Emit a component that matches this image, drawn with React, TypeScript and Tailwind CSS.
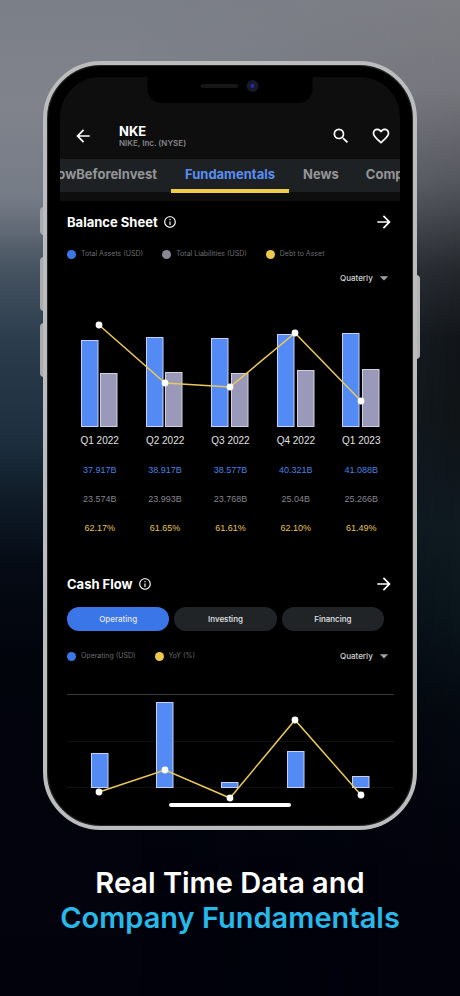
import {
  MdArrowBack,
  MdArrowDropDown,
  MdArrowForward,
  MdFavoriteBorder,
  MdInfoOutline,
  MdSearch,
} from "react-icons/md";

type Bar = { x: number; top: number };
type Point = { x: number; y: number };
type LegendItem = { label: string; dot: string };

const quarters = ["Q1 2022", "Q2 2022", "Q3 2022", "Q4 2022", "Q1 2023"];

const balanceRows = [
  {
    label: "Total Assets (USD)",
    color: "text-[#4a80e4]",
    values: ["37.917B", "38.917B", "38.577B", "40.321B", "41.088B"],
  },
  {
    label: "Total Liabilities (USD)",
    color: "text-[#85858f]",
    values: ["23.574B", "23.993B", "23.768B", "25.04B", "25.266B"],
  },
  {
    label: "Debt to Asset",
    color: "text-[#e3c558]",
    values: ["62.17%", "61.65%", "61.61%", "62.10%", "61.49%"],
  },
];

const assetBars: Bar[] = [
  { x: 14, top: 22 },
  { x: 79, top: 19 },
  { x: 144, top: 20 },
  { x: 210, top: 16 },
  { x: 275, top: 15 },
];

const liabilityBars: Bar[] = [
  { x: 33, top: 55 },
  { x: 98, top: 54 },
  { x: 164, top: 55 },
  { x: 230, top: 52 },
  { x: 295, top: 51 },
];

const debtPoints: Point[] = [
  { x: 32, y: 7 },
  { x: 98, y: 65 },
  { x: 163, y: 69 },
  { x: 228, y: 15 },
  { x: 294, y: 83 },
];

const cashBars: Bar[] = [
  { x: 24, top: 63 },
  { x: 89, top: 12 },
  { x: 154, top: 92 },
  { x: 220, top: 61 },
  { x: 285, top: 86 },
];

const yoyPoints: Point[] = [
  { x: 32, y: 102 },
  { x: 98, y: 80 },
  { x: 163, y: 108 },
  { x: 228, y: 30 },
  { x: 294, y: 105 },
];

function Bars({ bars, base, fill, stroke }: { bars: Bar[]; base: number; fill: string; stroke: string }) {
  return (
    <g fill={fill} stroke={stroke}>
      {bars.map((b) => (
        <rect key={b.x} x={b.x + 0.5} y={b.top + 0.5} width={16.5} height={base - b.top - 1} />
      ))}
    </g>
  );
}

function Line({ points }: { points: Point[] }) {
  return (
    <g>
      <polyline
        points={points.map((p) => `${p.x},${p.y}`).join(" ")}
        fill="none"
        stroke="#ecc958"
        strokeWidth={1.5}
      />
      {points.map((p) => (
        <circle key={p.x} cx={p.x} cy={p.y} r={3.4} fill="#fff" />
      ))}
    </g>
  );
}

function SectionTitle({ title }: { title: string }) {
  return (
    <div className="flex h-5 items-center justify-between">
      <div className="flex items-center gap-[5px]">
        <h2 className="text-[13px] leading-5 font-bold text-white">{title}</h2>
        <button type="button" aria-label={`About ${title}`} className="text-white">
          <MdInfoOutline size={14} />
        </button>
      </div>
      <button type="button" aria-label={`Open ${title}`} className="text-white">
        <MdArrowForward size={20} />
      </button>
    </div>
  );
}

function Legend({ items }: { items: LegendItem[] }) {
  return (
    <ul className="flex h-3 items-center gap-[19px]">
      {items.map((item) => (
        <li key={item.label} className="flex items-center gap-[5px]">
          <span className={`size-[9px] rounded-full ${item.dot}`} />
          <span className="text-[7px] leading-3 whitespace-nowrap text-[#6c6c70]">{item.label}</span>
        </li>
      ))}
    </ul>
  );
}

function PeriodSelect({ label }: { label: string }) {
  return (
    <div className="relative flex h-3 w-[54px] shrink-0 items-center">
      <select
        aria-label={label}
        defaultValue="Quaterly"
        className="w-full appearance-none bg-transparent text-[8px] leading-3 font-medium text-[#d6d6d6] outline-none"
      >
        <option>Quaterly</option>
        <option>Yearly</option>
      </select>
      <MdArrowDropDown
        size={20}
        className="pointer-events-none absolute right-0 text-[#a3a3a3]"
      />
    </div>
  );
}

function Header() {
  return (
    <header className="bg-[#0e0e0e]">
      <div className="flex h-[82px] items-center pt-9 pr-[9px] pl-[13px]">
        <button type="button" aria-label="Back" className="text-white">
          <MdArrowBack size={20} />
        </button>
        <div className="ml-[26px] flex-1">
          <h1 className="text-[13px] leading-[14px] font-bold text-white">NKE</h1>
          <p className="text-[8px] leading-[10px] font-semibold text-[#85858c]">NIKE, Inc. (NYSE)</p>
        </div>
        <div className="flex gap-5 text-white">
          <button type="button" aria-label="Search">
            <MdSearch size={20} />
          </button>
          <button type="button" aria-label="Add to favourites">
            <MdFavoriteBorder size={20} />
          </button>
        </div>
      </div>
      <nav className="grid h-[33px] grid-cols-[1fr_auto_1fr] bg-[#1e2123] text-[13px] leading-[30px] font-bold whitespace-nowrap text-[#949698]">
        <div className="flex justify-end overflow-hidden">
          <a href="#know" className="px-[14px]">owBeforeInvest</a>
        </div>
        <a href="#fundamentals" aria-current="page" className="border-b-4 border-[#f3cb4b] px-[14px] text-[#5a8ef2]">
          Fundamentals
        </a>
        <div className="flex overflow-hidden">
          <a href="#news" className="px-[14px]">News</a>
          <a href="#comp" className="pr-[14px] pl-[13px]">Comp</a>
        </div>
      </nav>
      <div className="h-[9px]" />
    </header>
  );
}

function BalanceSheet() {
  return (
    <section className="flex flex-col">
      <SectionTitle title="Balance Sheet" />
      <div className="mt-4">
        <Legend
          items={[
            { label: "Total Assets (USD)", dot: "bg-[#3b78e7]" },
            { label: "Total Liabilities (USD)", dot: "bg-[#8a8794]" },
            { label: "Debt to Asset", dot: "bg-[#ecc94b]" },
          ]}
        />
      </div>
      <div className="mt-3 flex justify-end">
        <PeriodSelect label="Balance sheet period" />
      </div>
      <svg viewBox="0 0 327 109" className="mt-[34px] block w-full" role="img" aria-label="Balance sheet chart">
        <Bars bars={assetBars} base={109} fill="#548af3" stroke="#c3d2f5" />
        <Bars bars={liabilityBars} base={109} fill="#9a99b9" stroke="#d2d2de" />
        <Line points={debtPoints} />
      </svg>
      <table className="w-full table-fixed text-center font-['Liberation_Sans',sans-serif]">
        <thead>
          <tr className="h-7 text-[10px] leading-3 text-[#e2e2e2]">
            {quarters.map((q) => (
              <th key={q} scope="col" className="p-0 font-normal whitespace-nowrap">{q}</th>
            ))}
          </tr>
        </thead>
        <tbody>
          {balanceRows.map((row) => (
            <tr key={row.label} aria-label={row.label} className={`h-[29px] text-[9px] leading-3 ${row.color}`}>
              {row.values.map((v) => (
                <td key={v} className="p-0">{v}</td>
              ))}
            </tr>
          ))}
        </tbody>
      </table>
    </section>
  );
}

function CashFlow() {
  return (
    <section className="mt-8 flex flex-col">
      <SectionTitle title="Cash Flow" />
      <div className="mt-[13px] mr-[10px] grid grid-cols-3 gap-[5px] text-[8px] leading-6 font-medium text-[#e6e6e6]">
        <button type="button" aria-pressed="true" className="rounded-full bg-[#3a76e8]">Operating</button>
        <button type="button" aria-pressed="false" className="rounded-full bg-[#202426]">Investing</button>
        <button type="button" aria-pressed="false" className="rounded-full bg-[#202426]">Financing</button>
      </div>
      <div className="mt-[19px] flex items-center justify-between">
        <Legend
          items={[
            { label: "Operating (USD)", dot: "bg-[#3b78e7]" },
            { label: "YoY (%)", dot: "bg-[#ecc94b]" },
          ]}
        />
        <PeriodSelect label="Cash flow period" />
      </div>
      <svg viewBox="0 0 327 112" className="mt-7 block w-full" role="img" aria-label="Cash flow chart">
        <path d="M0 4.5H327" stroke="#3a3a3a" />
        <path d="M0 51.5H327M0 97.5H327" stroke="#101010" />
        <Bars bars={cashBars} base={98} fill="#548af3" stroke="#c3d2f5" />
        <Line points={yoyPoints} />
      </svg>
    </section>
  );
}

function Phone() {
  return (
    <div className="relative mx-[43px] mt-[61px]">
      <span className="absolute top-[146px] -left-[3px] h-7 w-1 rounded-l-sm bg-[#a9abae]" />
      <span className="absolute top-[196px] -left-[3px] h-[54px] w-1 rounded-l-sm bg-[#a9abae]" />
      <span className="absolute top-[262px] -left-[3px] h-[54px] w-1 rounded-l-sm bg-[#a9abae]" />
      <span className="absolute top-[214px] -right-[3px] h-[84px] w-1 rounded-r-sm bg-[#b4b4b6]" />
      <div className="relative rounded-[58px] border-4 border-[#bbbcbd] bg-black px-[13px] pt-3 pb-[19px] shadow-[inset_0_0_1px_1px_#2a2a2a]">
        <main className="overflow-hidden rounded-t-[40px] bg-black">
          <Header />
          <div className="pt-[11px] pr-[6px] pl-[7px]">
            <BalanceSheet />
            <CashFlow />
          </div>
        </main>
        <div className="mx-auto mt-px h-1 w-[122px] rounded-full bg-white" />
        <div className="absolute top-[10px] left-1/2 flex h-7 w-[165px] -translate-x-1/2 items-center justify-end gap-[8px] rounded-b-[14px] bg-black pr-[54px] pb-[6px]">
          <span className="h-1 w-[38px] rounded-full bg-[#161616]" />
          <span className="flex size-3 items-center justify-center rounded-full bg-[#15192b]">
            <span className="size-1 rounded-full bg-[#2a2c9c]" />
          </span>
        </div>
      </div>
    </div>
  );
}

export default function App() {
  return (
    <div className="relative isolate flex min-h-screen flex-col overflow-hidden bg-[linear-gradient(180deg,#7b7f87_0%,#80838c_11%,#757b86_20%,#465361_27%,#2b3d4d_34%,#1d2f3f_44%,#0f1c28_50%,#050a14_57%,#02040c_66%,#01020b_100%)] pb-[58px] font-['Inter','Liberation_Sans',sans-serif]">
      <div className="absolute inset-0 -z-10 bg-[linear-gradient(180deg,#7c7e84_0%,#74767c_9%,#55585e_18%,#25282d_27%,#111519_34%,#0f1316_42%,#0f1a21_53%,#09141b_62%,#04080f_72%,#01020b_88%)] [mask-image:linear-gradient(90deg,transparent_30%,black_100%)]" />
      <Phone />
      <p className="mt-[35px] text-center text-[29px] leading-[35px] font-semibold text-white">
        Real Time Data and
        <br />
        <span className="text-[#27b9ea]">Company Fundamentals</span>
      </p>
    </div>
  );
}
